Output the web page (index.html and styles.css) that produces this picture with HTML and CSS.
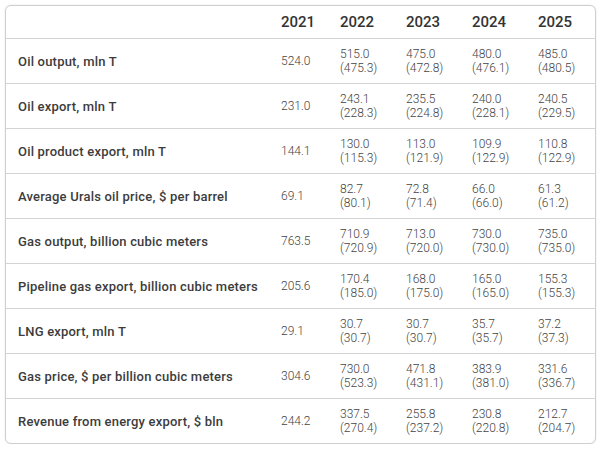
FILE: index.html
```html
<!DOCTYPE html>
<html>
<head>
<meta charset="utf-8">
<link rel="stylesheet" href="styles.css">
</head>
<body>
<div class="card">
  <div class="row head">
    <div class="label"></div>
    <div class="year">2021</div>
    <div class="year">2022</div>
    <div class="year">2023</div>
    <div class="year">2024</div>
    <div class="year">2025</div>
  </div>
  <div class="row">
    <div class="label">Oil output, mln T</div>
    <div class="val">524.0</div>
    <div class="val">515.0<br>(475.3)</div>
    <div class="val">475.0<br>(472.8)</div>
    <div class="val">480.0<br>(476.1)</div>
    <div class="val">485.0<br>(480.5)</div>
  </div>
  <div class="row">
    <div class="label">Oil export, mln T</div>
    <div class="val">231.0</div>
    <div class="val">243.1<br>(228.3)</div>
    <div class="val">235.5<br>(224.8)</div>
    <div class="val">240.0<br>(228.1)</div>
    <div class="val">240.5<br>(229.5)</div>
  </div>
  <div class="row">
    <div class="label">Oil product export, mln T</div>
    <div class="val">144.1</div>
    <div class="val">130.0<br>(115.3)</div>
    <div class="val">113.0<br>(121.9)</div>
    <div class="val">109.9<br>(122.9)</div>
    <div class="val">110.8<br>(122.9)</div>
  </div>
  <div class="row">
    <div class="label">Average Urals oil price, $ per barrel</div>
    <div class="val">69.1</div>
    <div class="val">82.7<br>(80.1)</div>
    <div class="val">72.8<br>(71.4)</div>
    <div class="val">66.0<br>(66.0)</div>
    <div class="val">61.3<br>(61.2)</div>
  </div>
  <div class="row">
    <div class="label">Gas output, billion cubic meters</div>
    <div class="val">763.5</div>
    <div class="val">710.9<br>(720.9)</div>
    <div class="val">713.0<br>(720.0)</div>
    <div class="val">730.0<br>(730.0)</div>
    <div class="val">735.0<br>(735.0)</div>
  </div>
  <div class="row">
    <div class="label">Pipeline gas export, billion cubic meters</div>
    <div class="val">205.6</div>
    <div class="val">170.4<br>(185.0)</div>
    <div class="val">168.0<br>(175.0)</div>
    <div class="val">165.0<br>(165.0)</div>
    <div class="val">155.3<br>(155.3)</div>
  </div>
  <div class="row">
    <div class="label">LNG export, mln T</div>
    <div class="val">29.1</div>
    <div class="val">30.7<br>(30.7)</div>
    <div class="val">30.7<br>(30.7)</div>
    <div class="val">35.7<br>(35.7)</div>
    <div class="val">37.2<br>(37.3)</div>
  </div>
  <div class="row">
    <div class="label">Gas price, $ per billion cubic meters</div>
    <div class="val">304.6</div>
    <div class="val">730.0<br>(523.3)</div>
    <div class="val">471.8<br>(431.1)</div>
    <div class="val">383.9<br>(381.0)</div>
    <div class="val">331.6<br>(336.7)</div>
  </div>
  <div class="row last">
    <div class="label">Revenue from energy export, $ bln</div>
    <div class="val">244.2</div>
    <div class="val">337.5<br>(270.4)</div>
    <div class="val">255.8<br>(237.2)</div>
    <div class="val">230.8<br>(220.8)</div>
    <div class="val">212.7<br>(204.7)</div>
  </div>
</div>
</body>
</html>
```

FILE: styles.css
```css
html, body {
  margin: 0;
  padding: 0;
  background: #ffffff;
}
body {
  font-family: Roboto, "Liberation Sans", sans-serif;
  color: #404040;
}
.card {
  margin: 5px 0 0 5px;
  width: 589px;
  border: 1px solid #cfcfcf;
  border-radius: 6px;
  box-shadow: 0 0 2px rgba(0, 0, 0, 0.12);
  background: #fff;
}
.row {
  display: grid;
  grid-template-columns: 275px 59px 66px 66px 66px 57px;
  align-items: center;
  height: 44px;
  border-bottom: 1px solid #d4d4d4;
}
.row.head {
  height: 32px;
}
.row.last {
  border-bottom: none;
}
.label {
  padding-left: 12px;
  font-size: 13px;
  font-weight: 500;
  letter-spacing: 0.2px;
  color: #3c3c3c;
  white-space: nowrap;
}
.year {
  font-size: 15px;
  font-weight: 500;
  color: #333;
}
.val {
  font-size: 12px;
  line-height: 14px;
  font-weight: 300;
  color: #444;
}
```
